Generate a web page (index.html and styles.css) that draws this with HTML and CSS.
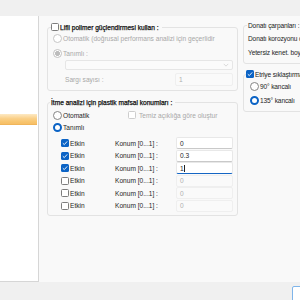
FILE: index.html
```html
<!DOCTYPE html>
<html lang="tr">
<head>
    <meta charset="UTF-8">
    <title>Kesit ayarları</title>
    <link rel="stylesheet" href="styles.css">
</head>
<body>
    <div class="topbar"></div>

    <div class="main">
        <div class="tree">
            <div class="tree-sel"></div>
        </div>

        <div class="content">
            <div class="col col-left">
                <fieldset class="group group-frp">
                    <legend class="legend strong">
                        <span class="cb"></span>
                        <span>Lifli polimer güçlendirmesi kullan :</span>
                    </legend>
                    <div class="row dis">
                        <span class="rd dis"></span>
                        <span>Otomatik (doğrusal performans analizi için geçerlidir</span>
                    </div>
                    <div class="row dis row-gap">
                        <span class="rd dis-on"></span>
                        <span>Tanımlı :</span>
                    </div>
                    <div class="combo">
                        <svg class="chev" viewBox="0 0 8 5" fill="none" stroke="#c4c4c4" stroke-width="0.8">
                            <polyline points="1,1 4,4 7,1"></polyline>
                        </svg>
                    </div>
                    <div class="field dis">
                        <span>Sargı sayısı :</span>
                        <span class="input input-dis">1</span>
                    </div>
                </fieldset>

                <fieldset class="group group-hinge">
                    <legend class="legend strong legend-text">İtme analizi için plastik mafsal konumları :</legend>
                    <div class="row row-auto">
                        <span class="rd"></span>
                        <span class="auto-label">Otomatik</span>
                        <span class="cb dis"></span>
                        <span class="dis-text">Temiz açıklığa göre oluştur</span>
                    </div>
                    <div class="row">
                        <span class="rd on"></span>
                        <span>Tanımlı</span>
                    </div>
                    <div class="hinges">
                        <div class="hinge">
                            <span class="cb on"><svg viewBox="0 0 8 8"><polyline points="1.8,4.2 3.3,5.6 6.2,2.4" fill="none" stroke="#fff" stroke-width="0.9"></polyline></svg></span>
                            <span>Etkin</span>
                            <span>Konum [0...1] :</span>
                            <span class="input">0</span>
                        </div>
                        <div class="hinge">
                            <span class="cb on"><svg viewBox="0 0 8 8"><polyline points="1.8,4.2 3.3,5.6 6.2,2.4" fill="none" stroke="#fff" stroke-width="0.9"></polyline></svg></span>
                            <span>Etkin</span>
                            <span>Konum [0...1] :</span>
                            <span class="input">0.3</span>
                        </div>
                        <div class="hinge">
                            <span class="cb on"><svg viewBox="0 0 8 8"><polyline points="1.8,4.2 3.3,5.6 6.2,2.4" fill="none" stroke="#fff" stroke-width="0.9"></polyline></svg></span>
                            <span>Etkin</span>
                            <span>Konum [0...1] :</span>
                            <span class="input focus">1<span class="caret"></span></span>
                        </div>
                        <div class="hinge">
                            <span class="cb"></span>
                            <span>Etkin</span>
                            <span>Konum [0...1] :</span>
                            <span class="input input-dis">0</span>
                        </div>
                        <div class="hinge">
                            <span class="cb"></span>
                            <span>Etkin</span>
                            <span>Konum [0...1] :</span>
                            <span class="input input-dis">0</span>
                        </div>
                        <div class="hinge">
                            <span class="cb"></span>
                            <span>Etkin</span>
                            <span>Konum [0...1] :</span>
                            <span class="input input-dis">0</span>
                        </div>
                    </div>
                </fieldset>
            </div>

            <div class="col col-right">
                <fieldset class="group group-side">
                    <legend class="legend legend-text">Donatı çarpanları :</legend>
                    <div class="row side-row">Donatı korozyonu çarpanı :</div>
                    <div class="row side-row">Yetersiz kenet. boyu çarpanı :</div>
                </fieldset>

                <fieldset class="group group-side group-stirrup">
                    <legend class="legend">
                        <span class="cb on"><svg viewBox="0 0 8 8"><polyline points="1.8,4.2 3.3,5.6 6.2,2.4" fill="none" stroke="#fff" stroke-width="0.9"></polyline></svg></span>
                        <span>Etriye sıklaştırması</span>
                    </legend>
                    <div class="row side-radio">
                        <span class="rd"></span>
                        <span>90° kancalı</span>
                    </div>
                    <div class="row side-radio">
                        <span class="rd on"></span>
                        <span>135° kancalı</span>
                    </div>
                </fieldset>
            </div>
        </div>
    </div>

    <div class="bottombar">
        <span class="button"></span>
    </div>
</body>
</html>
```

FILE: styles.css
```css
* {
    margin: 0;
    padding: 0;
    box-sizing: border-box;
}

body {
    width: 300px;
    height: 300px;
    overflow: hidden;
    background: #f0f0f0;
    font-family: "Liberation Sans", Arial, sans-serif;
    font-size: 6.6px;
    color: #1f1f1f;
}

.topbar {
    height: 16px;
    background: #f0f0f0;
}

.main {
    display: flex;
    height: 266px;
    background: #f9f9f9;
}

.tree {
    width: 39px;
    flex-shrink: 0;
    background: #fff;
    border-right: 1px solid #d6d6d6;
    border-bottom: 1px solid #d6d6d6;
    padding-top: 98px;
}

.tree-sel {
    height: 11px;
    margin-right: 1px;
    background: linear-gradient(#fde9c4, #fad089 45%, #f8c46c 80%, #f6bf66);
    border-bottom: 1px solid #f0b55a;
}

.content {
    display: flex;
    gap: 5px;
    padding: 4px 0 0 8px;
}

.col {
    display: flex;
    flex-direction: column;
}

.col-left {
    width: 191px;
    flex-shrink: 0;
    padding-top: 2px;
}

.col-right {
    width: 90px;
    flex-shrink: 0;
}

/* group boxes */
.group {
    border: 1px solid #e3e3e3;
    border-radius: 3px;
    padding: 0 4px 4px 3px;
    min-width: 0;
}

.legend {
    display: flex;
    align-items: center;
    gap: 1px;
    height: 10px;
    padding-right: 3px;
    margin-left: 0;
    color: #1a1a1a;
}

.strong {
    color: #111;
    -webkit-text-stroke: 0.25px #111;
}

.legend-text {
    margin-left: -1px;
    padding-left: 1px;
}

.row {
    display: flex;
    align-items: center;
    gap: 1px;
    height: 12px;
    margin-left: 2px;
    white-space: nowrap;
}

.row-gap {
    margin-top: 3px;
}

.dis,
.dis-text {
    color: #a8a8a8;
}

.combo {
    height: 10px;
    margin: 1px 0 0 14px;
    width: 168px;
    border: 1px solid #e6e6e6;
    border-radius: 2px;
    background: #fbfbfb;
    display: flex;
    justify-content: flex-end;
    align-items: center;
    padding-right: 3px;
}

.chev {
    width: 6px;
    height: 4px;
}

.field {
    display: flex;
    align-items: center;
    justify-content: space-between;
    margin: 3px 0 0 14px;
    width: 168px;
}

/* inputs */
.input {
    display: flex;
    align-items: center;
    width: 58px;
    height: 12px;
    padding-left: 3px;
    background: #fff;
    border: 1px solid #e8e8e8;
    border-bottom-color: #c9c9c9;
    border-radius: 2px;
    color: #1f1f1f;
}

.input-dis {
    background: #fafafa;
    border-color: #efefef;
    color: #b0b0b0;
}

.focus {
    border-bottom: 1px solid #1566c4;
}

.caret {
    width: 0.6px;
    height: 7px;
    background: #222;
    margin-left: 0.5px;
}

.field .input {
    height: 13px;
}

/* hinge group */
.group-hinge {
    margin-top: 6px;
    padding-bottom: 3px;
}

.row-auto {
    margin-top: 2px;
}

.auto-label {
    width: 64px;
}

.row-auto .cb {
    margin-right: 2px;
}

.hinges {
    display: flex;
    flex-direction: column;
    gap: 0.5px;
    margin: 4px 0 0 10px;
}

.hinge {
    display: grid;
    grid-template-columns: 9px 45px 61px 57px;
    align-items: center;
    height: 12px;
    white-space: nowrap;
}

.hinge .input {
    width: 57px;
}

/* right column */
.group-side {
    padding: 0 0 5px 3px;
    white-space: nowrap;
    letter-spacing: -0.15px;
}

.group-side .legend-text {
    margin-left: 0;
}

.side-row {
    margin: 2px 0 0 1px;
}

.group-stirrup {
    margin-top: 5px;
}

.group-stirrup .legend {
    margin-left: -1px;
}

.side-radio {
    margin: 1px 0 0 3px;
}

.side-radio + .side-radio {
    margin-top: 2px;
}

/* controls */
.cb {
    display: inline-flex;
    width: 8px;
    height: 8px;
    flex-shrink: 0;
    border: 1px solid #7d7d7d;
    border-radius: 1.5px;
    background: #fff;
}

.cb svg {
    width: 100%;
    height: 100%;
}

.cb.on {
    border: none;
    background: #0b63c5;
}

.cb.dis {
    border-color: #cdcdcd;
}

.rd {
    width: 9px;
    height: 9px;
    flex-shrink: 0;
    border: 1px solid #858585;
    border-radius: 50%;
    background: #fff;
}

.rd.on {
    border: 2.6px solid #0b63c5;
}

.rd.dis {
    border-color: #c6c6c6;
}

.rd.dis-on {
    border: 1px solid #c2c2c2;
    background: radial-gradient(circle, #bdbdbd 0 2.2px, #fff 2.6px);
}

.bottombar {
    height: 18px;
    display: flex;
    justify-content: flex-end;
    padding-top: 4px;
}

.button {
    width: 14px;
    height: 20px;
    margin-right: -6px;
    background: #fff;
    border: 1px solid #7fb5ea;
    border-radius: 2px;
}
```
